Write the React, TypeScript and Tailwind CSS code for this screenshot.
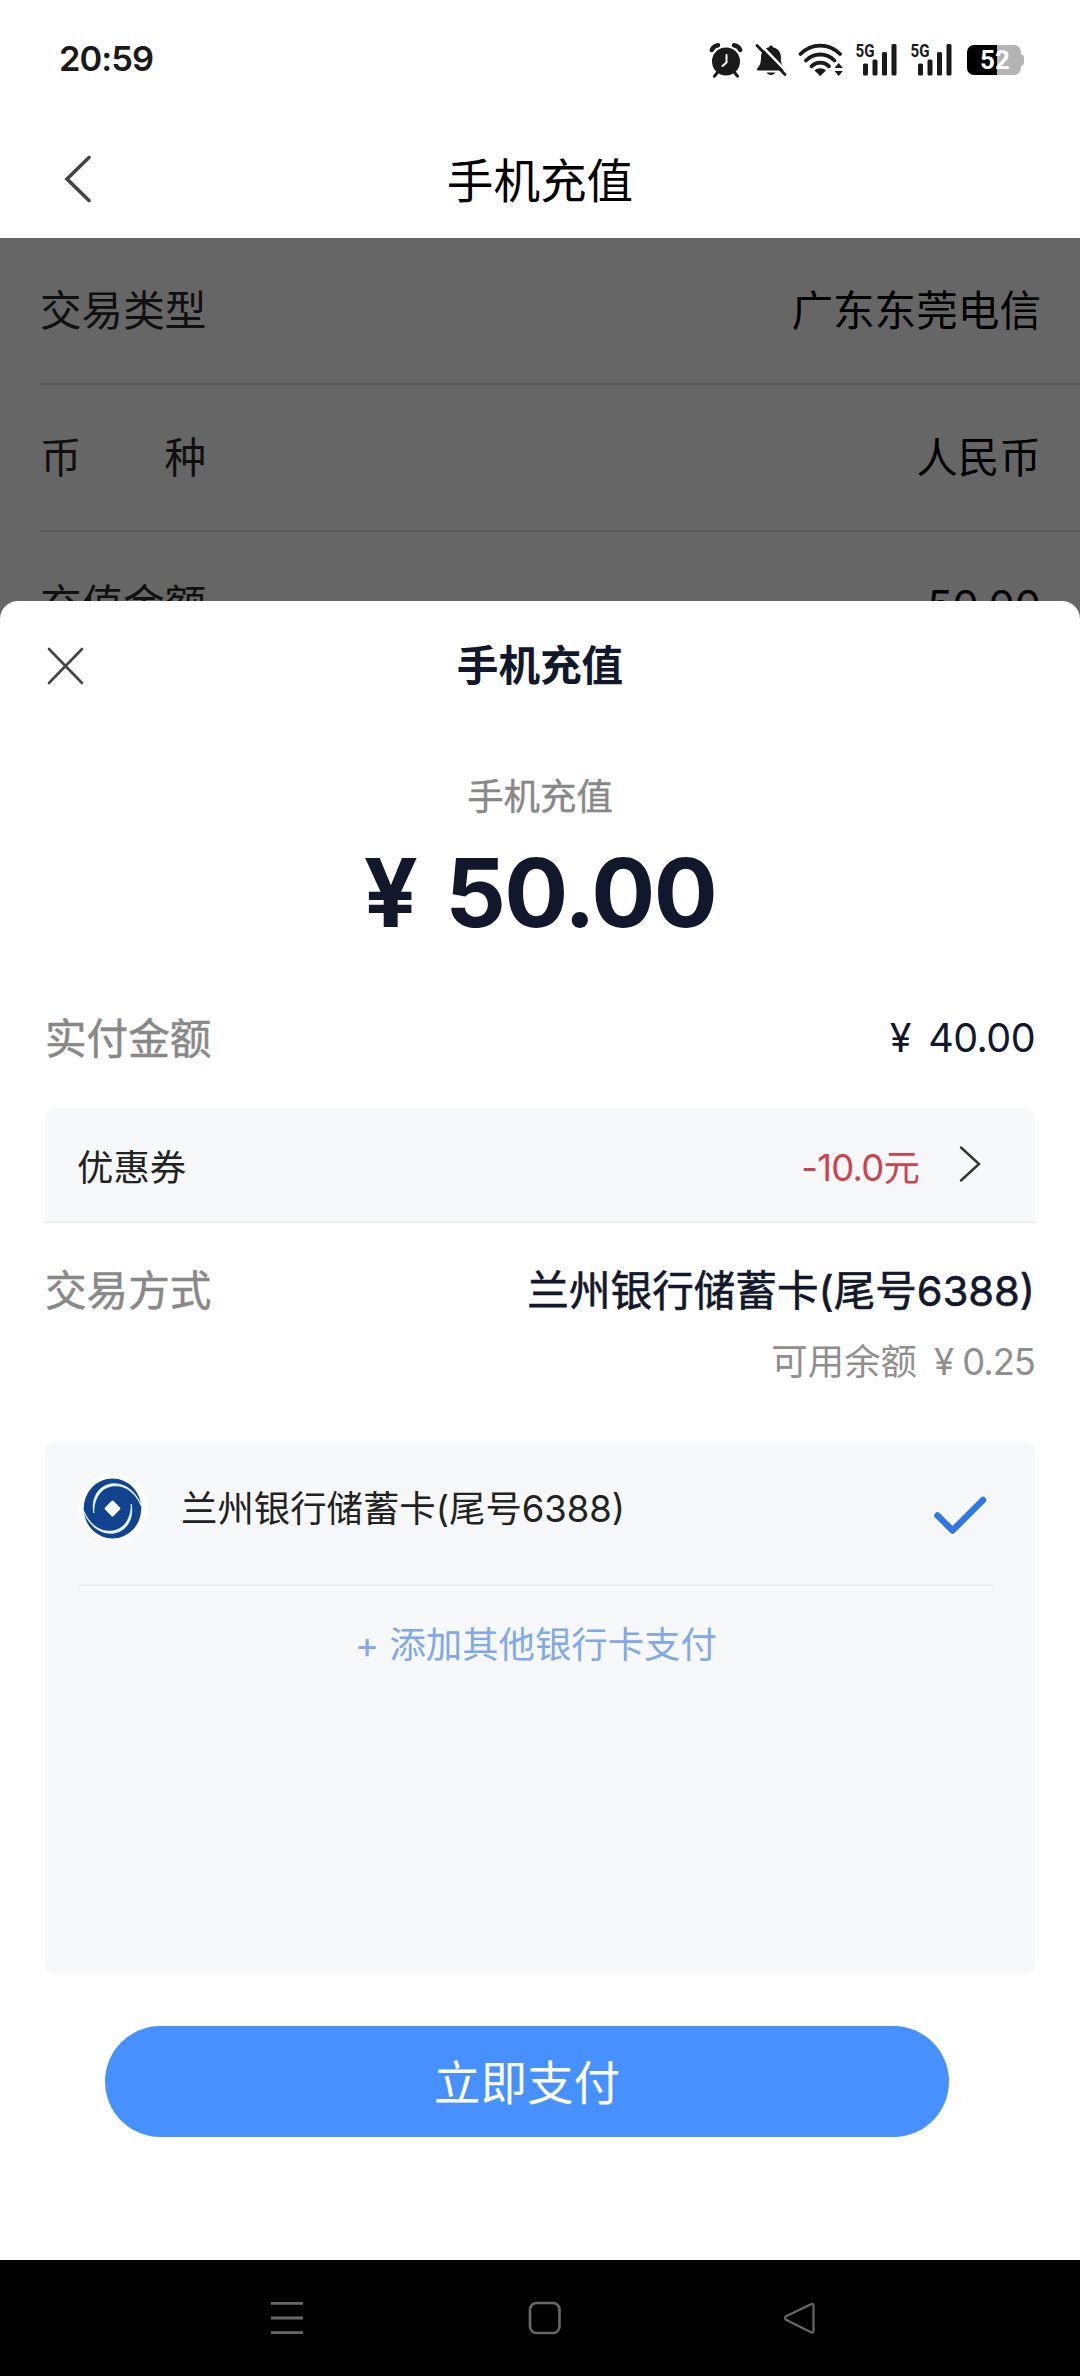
import React from 'react';

const orderRows = [
  { label: ['交易类型'], value: '广东东莞电信' },
  { label: ['币', '种'], value: '人民币' },
  { label: ['充值金额'], value: '50.00' },
];

const AlarmIcon = () => (
  <svg className="w-[34px] h-[36px]" viewBox="0 0 34 36" fill="none">
    <circle cx="17" cy="19.5" r="14" fill="#1a1a1a" />
    <path d="M2.800 8C3.800 5.500 6 3.600 9 3.200M31.200 8C30.200 5.500 28 3.600 25 3.200" stroke="#1a1a1a" strokeWidth="4.400" strokeLinecap="round" />
    <path d="M8 31l-2.500 3.200M26 31l2.500 3.200" stroke="#1a1a1a" strokeWidth="3" strokeLinecap="round" />
    <path d="M17.500 13v7.500l-4 3.500" stroke="#fff" strokeWidth="2" strokeLinecap="round" strokeLinejoin="round" />
  </svg>
);

const BellOffIcon = () => (
  <svg className="w-[32px] h-[36px]" viewBox="0 0 32 36" fill="none">
    <path d="M16 3.500c1 0 1.800.7 1.900 1.700 5 1 8 4.800 8 10 0 7 1.500 9 3.600 11.300.6 1 .1 2-1.100 2H3.200c-1.200 0-1.700-1-1.100-2C4.300 24.200 6 22 6 15.200c0-5.200 3.200-9 8.100-10 .1-1 .9-1.700 1.900-1.700z" fill="#1a1a1a" />
    <path d="M11.500 30.500h9c-1 1.600-2.600 2.500-4.500 2.500s-3.500-.9-4.500-2.500z" fill="#1a1a1a" />
    <path d="M4.500 1.500l27 28" stroke="#fff" strokeWidth="2.500" />
    <path d="M2 3.500l28 29" stroke="#1a1a1a" strokeWidth="2.700" strokeLinecap="round" />
  </svg>
);

const WifiIcon = () => (
  <svg className="w-[46px] h-[36px]" viewBox="0 0 46 36" fill="none" stroke="#1a1a1a">
    <path d="M2.500 12c11-11.300 28.500-11.300 39.500 0" strokeWidth="3.800" strokeLinecap="round" />
    <path d="M8 18.500c8-8 20.500-8 28.500 0" strokeWidth="3.800" strokeLinecap="round" />
    <path d="M13.500 24.300c5-4.800 12.500-4.800 17.500 0" strokeWidth="3.800" strokeLinecap="round" />
    <path d="M16.500 28.500c3.300-3 8-3 11.500 0L22.200 34z" fill="#1a1a1a" stroke="none" />
    <path d="M36.500 26l4.200-5 4.200 5zM36.500 29h8.400l-4.200 5z" fill="#1a1a1a" stroke="none" />
  </svg>
);

const SignalIcon = () => (
  <svg className="w-[43px] h-[40px] overflow-visible" viewBox="0 -2 43 40" fill="#1a1a1a">
    <text x="0.5" y="14.500" fontSize="17.500" fontWeight="700" fontFamily="Roboto, sans-serif" textLength="19" lengthAdjust="spacingAndGlyphs">5G</text>
    <rect x="8" y="21.500" width="5" height="12" rx="1.500" />
    <rect x="17.500" y="17.500" width="5" height="16" rx="1.500" />
    <rect x="27" y="10" width="5" height="23.500" rx="1.500" />
    <rect x="36.500" y="2" width="5" height="31.500" rx="1.500" />
  </svg>
);

const BatteryIcon = () => (
  <svg className="w-[58px] h-[30px]" viewBox="0 0 58 30">
    <path d="M30 0h17a7 7 0 0 1 7 7v2c2 1 3 2 3 3v6c0 1-1 2-3 3v2a7 7 0 0 1-7 7H30z" fill="#b4b4b4" />
    <path d="M30 0H7a7 7 0 0 0-7 7v16a7 7 0 0 0 7 7h23z" fill="#000" />
    <text x="13" y="24" fontSize="26" fontWeight="700" fill="#fff" fontFamily="Roboto, sans-serif" textLength="30">52</text>
  </svg>
);

const BankLogo = () => (
  <svg className="w-[70px] h-[70px]" viewBox="0 0 70 70" fill="none">
    <circle cx="35" cy="35" r="35" fill="#fff" />
    <ellipse cx="34.500" cy="35.500" rx="28.800" ry="30" fill="#11438f" />
    <path d="M15.800 40C13 25 20.500 12.500 34 10.800c13-1 24 7.500 29.300 22C57.500 20 48 12.200 36.500 12.800 23.500 13.500 15.500 25 15.800 40z" fill="#eafcff" stroke="#eafcff" strokeWidth=".8" />
    <path d="M53.200 31c2.800 15-4.700 27.500-18.200 29.200-13 1-24-7.500-29.300-22 5.800 12.800 15.300 20.600 26.800 20 13-.7 21-12.200 20.700-27.200z" fill="#eafcff" stroke="#eafcff" strokeWidth=".8" />
    <rect x="28.500" y="29.500" width="12" height="12" rx="1.500" fill="#fff" transform="rotate(45 34.500 35.500)" />
  </svg>
);

const StatusBar = () => (
  <div className="flex items-center justify-between h-[118px] pl-[59px] pr-[55px]">
    <span className="pt-[1px] text-[34.5px] font-semibold leading-none tracking-[-1px] text-[#1a1a1a]">20:59</span>
    <div className="flex items-center pt-[1px]">
      <AlarmIcon />
      <div className="ml-[12px]"><BellOffIcon /></div>
      <div className="ml-[11px]"><WifiIcon /></div>
      <div className="ml-[11px]"><SignalIcon /></div>
      <div className="ml-[12px]"><SignalIcon /></div>
      <div className="ml-[14px]"><BatteryIcon /></div>
    </div>
  </div>
);

const PaymentSheet = () => (
  <section className="absolute bottom-0 left-0 right-0 h-[1659px] bg-white rounded-t-[18px] px-[45px] text-[#12182b]">
    <div className="grid grid-cols-3 items-center h-[130px]">
      <svg className="w-[40px] h-[40px]" viewBox="0 0 40 40" stroke="#444" strokeWidth="2.600" strokeLinecap="round">
        <path d="M4 3l33 34M37 3L4 37" />
      </svg>
      <h2 className="pt-[2px] text-[41.6px] font-bold leading-none text-center">手机充值</h2>
    </div>

    <p className="mt-[46px] h-[40px] text-center text-[36.4px] leading-[40px] text-[#888] [-webkit-text-stroke:0.4px]">手机充值</p>
    <p className="mt-[28px] h-[96px] text-center text-[95px] font-bold leading-[96px] tracking-[-1.6px] [word-spacing:8px]">¥ 50.00</p>

    <div className="mt-[70px] flex h-[56px] items-center justify-between text-[41.6px] leading-none">
      <span className="pt-[2px] text-[#888] [-webkit-text-stroke:0.5px]">实付金额</span>
      <span className="text-[39.5px] tracking-[-0.6px] [word-spacing:7px]">¥ 40.00</span>
    </div>

    <div className="mt-[41px] flex h-[115px] items-center rounded-t-[10px] border-b-2 border-[#eeeff0] bg-[#f7f8fa] pl-[32px] pr-[54px] text-[36.4px] leading-none">
      <span className="flex-1 pt-[8px] text-[#222]">优惠券</span>
      <span className="pt-[8px] tracking-[-0.8px] text-[#d2404e]">-10.0元</span>
      <svg className="ml-[40px] mb-[2px] h-[38px] w-[22px]" viewBox="0 0 22 38" fill="none" stroke="#333" strokeWidth="2.400" strokeLinecap="round">
        <path d="M2 2.500L20 19 2 35.500" />
      </svg>
    </div>

    <div className="mt-[40px] flex h-[56px] items-center justify-between pt-[2px] text-[41.6px] leading-none">
      <span className="text-[#888] [-webkit-text-stroke:0.5px]">交易方式</span>
      <span className="[-webkit-text-stroke:0.6px]">兰州银行储蓄卡(尾号6388)</span>
    </div>
    <p className="mt-[22px] flex h-[40px] justify-end text-[36.4px] leading-[42px] text-[#8f8f8f]">
      <span>可用余额</span>
      <span className="ml-[17px] tracking-[-1px]">¥ 0.25</span>
    </p>

    <div className="mt-[61px] h-[532px] rounded-[10px] bg-[#f7f8fa] pl-[33px] pr-[41px]">
      <div className="flex h-[144px] items-center border-b-2 border-[#edeff1] pb-[10px] text-[36.4px] leading-none text-[#222]">
        <BankLogo />
        <span className="ml-[33px] flex-1 pt-[2px]">兰州银行储蓄卡(尾号6388)</span>
        <svg className="mr-[7px] mt-[14px] h-[40px] w-[54px]" viewBox="0 0 54 40" fill="none" stroke="#2f76e6" strokeWidth="6.400" strokeLinecap="round" strokeLinejoin="round">
          <path d="M4.500 20.500l15 15L50 5" />
        </svg>
      </div>
      <button className="flex h-[116px] w-full items-center justify-center pt-[2px] text-[36.4px] leading-none text-[#80a8ea]">
        + 添加其他银行卡支付
      </button>
    </div>

    <button className="mt-[52px] ml-[60px] h-[111px] w-[844px] rounded-full bg-[#4691ff] pt-[3px] text-[46.6px] leading-none text-white">
      立即支付
    </button>
  </section>
);

const NavBar = () => (
  <nav className="flex h-[116px] items-center bg-black pl-[270px] text-[#686868]">
    <svg className="h-[34px] w-[34px]" viewBox="0 0 34 34" stroke="currentColor" strokeWidth="2.800">
      <path d="M1 2.300h32M1 17h32M1 31.700h32" />
    </svg>
    <svg className="ml-[224px] h-[34px] w-[34px]" viewBox="0 0 34 34" fill="none" stroke="currentColor" strokeWidth="2.600">
      <rect x="2" y="2" width="29.500" height="30" rx="6.500" />
    </svg>
    <svg className="ml-[221px] h-[34px] w-[34px]" viewBox="0 0 34 34" fill="none" stroke="currentColor" strokeWidth="2.200" strokeLinejoin="round">
      <path d="M28 3.200 3 15.300a2 2 0 0 0 0 3.400L28 31.200c1.300.7 2.500.2 2.500-1.200V4.400c0-1.400-1.200-1.900-2.500-1.200z" />
    </svg>
  </nav>
);

const App: React.FC = () => {
  return (
    <div className="w-[1080px] h-[2376px] overflow-hidden whitespace-nowrap bg-white font-[Inter,'Noto_Sans_CJK_SC',sans-serif]">
      <StatusBar />
      <header className="relative flex h-[120px] items-center justify-center">
        <svg className="absolute left-[63px] top-[36px] h-[50px] w-[30px]" viewBox="0 0 30 50" fill="none" stroke="#444" strokeWidth="3.600" strokeLinecap="round">
          <path d="M26 3.500L4 25l22 21.500" />
        </svg>
        <h1 className="mt-[7px] text-[46.6px] leading-none text-black">手机充值</h1>
      </header>

      <main className="relative h-[2022px] overflow-hidden">
        {orderRows.map((row, index) => (
          <div key={index} className="ml-[40px] flex h-[147px] items-center justify-between border-b-2 border-[#e0e0e0] pr-[39px] pt-[2px] text-[41.6px] leading-none">
            <span className="flex w-[166px] justify-between text-[#2a2a2a]">
              {row.label.map((part) => <span key={part}>{part}</span>)}
            </span>
            <span className="text-black">{row.value}</span>
          </div>
        ))}
        <div className="absolute inset-0 bg-black/60" />
        <PaymentSheet />
      </main>

      <NavBar />
    </div>
  );
};

export default App;
